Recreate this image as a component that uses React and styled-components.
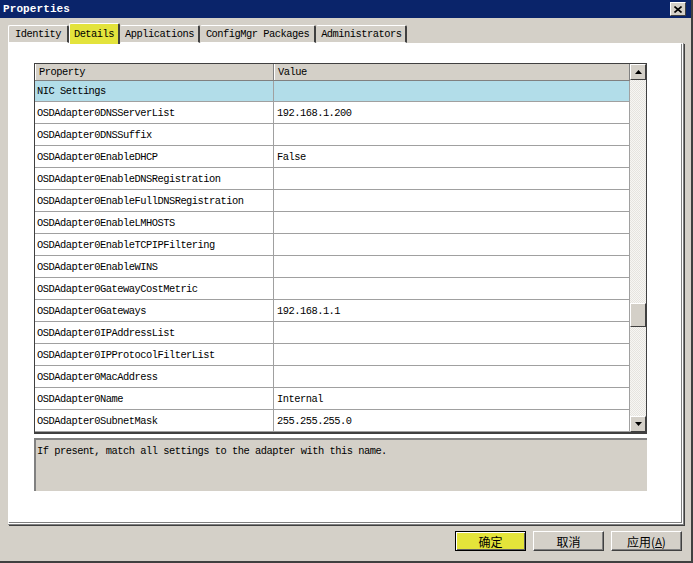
import React from "react";
import styled, { createGlobalStyle } from "styled-components";

const Global = createGlobalStyle`
  html, body { margin: 0; padding: 0; background: #d4d0c8; }
  body { font-family: "Liberation Mono", "DejaVu Sans Mono", monospace; }
`;

const MONO = `"Liberation Mono", "Noto Sans CJK SC", monospace`;

const Window = styled.div`
  width: 693px;
  height: 563px;
  box-sizing: border-box;
  background: #d4d0c8;
  border-right: 2px solid #404040;
  border-bottom: 2px solid #404040;
  display: flex;
  flex-direction: column;
  overflow: hidden;
`;

const TitleBar = styled.div`
  height: 18px;
  background: #0a246a;
  display: flex;
  align-items: center;
  justify-content: space-between;
  padding: 0 3px 0 3px;
  flex-shrink: 0;
`;

const Title = styled.span`
  color: #fff;
  font-family: ${MONO};
  font-weight: bold;
  font-size: 11px;
  letter-spacing: 0.1px;
`;

const CloseBtn = styled.div`
  width: 16px;
  height: 14px;
  box-sizing: border-box;
  background: #d4d0c8;
  border: 1px solid;
  border-color: #fff #404040 #404040 #fff;
  display: flex;
  align-items: center;
  justify-content: center;
  margin-right: 2px;
`;

const TabStrip = styled.div`
  display: flex;
  align-items: flex-end;
  padding: 0 0 0 8px;
  margin-top: 6px;
  height: 19px;
  flex-shrink: 0;
  position: relative;
  z-index: 2;
`;

const Tab = styled.div`
  font-family: ${MONO};
  font-size: 10.4px;
  letter-spacing: -0.5px;
  color: #000;
  height: ${(p) => (p.$active ? 21 : 18)}px;
  box-sizing: border-box;
  padding: 0 ${(p) => p.$pad || 5}px;
  display: flex;
  align-items: center;
  background: ${(p) => (p.$active ? "#e3e33c" : "#d4d0c8")};
  border-top: 1px solid #fff;
  border-left: 1px solid ${(p) => (p.$first || p.$active ? "#fff" : "transparent")};
  border-right: 2px solid #404040;
  border-bottom: ${(p) => (p.$active ? "none" : "1px solid #fff")};
  margin-bottom: ${(p) => (p.$active ? "-1px" : "0")};
  border-radius: 2px 2px 0 0;
`;

const Panel = styled.div`
  margin: 0 7px 0 8px;
  height: 482px;
  box-sizing: border-box;
  background: #fff;
  border-left: 1px solid #fff;
  border-top: 1px solid #fff;
  border-right: 3px double #808080;
  border-bottom: 3px double #808080;
  box-shadow: 1px 1px 0 #404040;
  padding: 19px 0 0 25px;
  display: flex;
  flex-direction: column;
  gap: 4px;
`;

const List = styled.div`
  width: 613px;
  height: 371px;
  box-sizing: border-box;
  border: 1px solid #404040;
  border-bottom-width: 2px;
  display: flex;
  overflow: hidden;
  background: #fff;
`;

const ListBody = styled.div`
  flex: 1;
  overflow: hidden;
  display: flex;
  flex-direction: column;
`;

const HeaderRow = styled.div`
  display: grid;
  grid-template-columns: 239px 1fr;
  height: 17px;
  box-sizing: border-box;
  flex-shrink: 0;
  background: #d4d0c8;
  border-bottom: 1px solid #808080;
`;

const HeaderCell = styled.div`
  font-family: ${MONO};
  font-size: 10.4px;
  letter-spacing: -0.5px;
  padding-left: 3px;
  display: flex;
  align-items: center;
  border-right: 1px solid #808080;
  border-left: 1px solid #fff;
`;

const Row = styled.div`
  display: grid;
  grid-template-columns: 239px 1fr;
  height: ${(p) => (p.$selected ? 21 : 22)}px;
  flex-shrink: 0;
  box-sizing: border-box;
  background: ${(p) => (p.$selected ? "#b2dde9" : "#fff")};
  border-bottom: 1px solid #a0a0a0;
`;

const Cell = styled.div`
  font-family: ${MONO};
  font-size: 10.4px;
  letter-spacing: -0.5px;
  color: #000;
  padding-left: ${(p) => (p.$value ? 3 : 2)}px;
  display: flex;
  align-items: center;
  border-right: 1px solid #a0a0a0;
  white-space: nowrap;
`;

const ScrollBar = styled.div`
  width: 16px;
  flex-shrink: 0;
  display: flex;
  flex-direction: column;
  background-color: #eeede9;
  background-image: repeating-conic-gradient(#f7f6f3 0 25%, #e6e4df 0 50%);
  background-size: 2px 2px;
`;

const ScrollBtn = styled.div`
  height: 16px;
  flex-shrink: 0;
  box-sizing: border-box;
  background: #d4d0c8;
  border: 1px solid;
  border-color: #fff #404040 #404040 #fff;
  display: flex;
  align-items: center;
  justify-content: center;
`;

const Track = styled.div`
  flex: 1;
  display: flex;
  flex-direction: column;
`;

const Thumb = styled.div`
  height: 24px;
  box-sizing: border-box;
  background: #d4d0c8;
  border: 1px solid;
  border-color: #fff #404040 #404040 #fff;
  margin-top: ${(p) => p.$offset}px;
`;

const Description = styled.div`
  width: 613px;
  height: 53px;
  box-sizing: border-box;
  background: #d4d0c8;
  border-top: 2px solid #808080;
  border-left: 2px solid #808080;
  font-family: ${MONO};
  font-size: 10.4px;
  letter-spacing: -0.5px;
  padding: 5px 0 0 1px;
  color: #000;
`;

const ButtonRow = styled.div`
  display: flex;
  justify-content: flex-end;
  gap: 7px;
  padding: 6px 9px 0 0;
`;

const Button = styled.div`
  width: 71px;
  height: 20px;
  box-sizing: border-box;
  background: ${(p) => (p.$primary ? "#e4e43a" : "#d4d0c8")};
  border: 1px solid;
  border-color: ${(p) => (p.$primary ? "#000" : "#fff #404040 #404040 #fff")};
  box-shadow: ${(p) => (p.$primary ? "inset 1px 1px 0 #fff, inset -1px -1px 0 #606060" : "inset -1px -1px 0 #808080")};
  font-family: "Noto Sans CJK SC", sans-serif;
  font-size: 12px;
  display: flex;
  align-items: center;
  justify-content: center;
  color: #000;
`;

const Under = styled.span`
  text-decoration: underline;
  font-size: 11px;
`;

const rows = [
  ["NIC Settings", "", true],
  ["OSDAdapter0DNSServerList", "192.168.1.200"],
  ["OSDAdapter0DNSSuffix", ""],
  ["OSDAdapter0EnableDHCP", "False"],
  ["OSDAdapter0EnableDNSRegistration", ""],
  ["OSDAdapter0EnableFullDNSRegistration", ""],
  ["OSDAdapter0EnableLMHOSTS", ""],
  ["OSDAdapter0EnableTCPIPFiltering", ""],
  ["OSDAdapter0EnableWINS", ""],
  ["OSDAdapter0GatewayCostMetric", ""],
  ["OSDAdapter0Gateways", "192.168.1.1"],
  ["OSDAdapter0IPAddressList", ""],
  ["OSDAdapter0IPProtocolFilterList", ""],
  ["OSDAdapter0MacAddress", ""],
  ["OSDAdapter0Name", "Internal"],
  ["OSDAdapter0SubnetMask", "255.255.255.0"],
];

const Arrow = ({ up }) => (
  <svg width="7" height="4" viewBox="0 0 7 4">
    <path d={up ? "M0 4 L3.5 0 L7 4 Z" : "M0 0 L7 0 L3.5 4 Z"} fill="#000" />
  </svg>
);

export default function App() {
  return (
    <>
      <Global />
      <Window>
        <TitleBar>
          <Title>Properties</Title>
          <CloseBtn>
            <svg width="8" height="7" viewBox="0 0 8 7">
              <path d="M0.5 0.5 L7.5 6.5 M7.5 0.5 L0.5 6.5" stroke="#000" strokeWidth="1.6" />
            </svg>
          </CloseBtn>
        </TitleBar>
        <TabStrip>
          <Tab $first $pad={6}>Identity</Tab>
          <Tab $active $pad={4}>Details</Tab>
          <Tab $pad={4}>Applications</Tab>
          <Tab $pad={5}>ConfigMgr Packages</Tab>
          <Tab $pad={4}>Administrators</Tab>
        </TabStrip>
        <Panel>
          <List>
            <ListBody>
              <HeaderRow>
                <HeaderCell>Property</HeaderCell>
                <HeaderCell>Value</HeaderCell>
              </HeaderRow>
              {rows.map(([k, v, sel]) => (
                <Row key={k} $selected={sel}>
                  <Cell>{k}</Cell>
                  <Cell $value>{v}</Cell>
                </Row>
              ))}
            </ListBody>
            <ScrollBar>
              <ScrollBtn>
                <Arrow up />
              </ScrollBtn>
              <Track>
                <Thumb $offset={223} />
              </Track>
              <ScrollBtn>
                <Arrow />
              </ScrollBtn>
            </ScrollBar>
          </List>
          <Description>If present, match all settings to the adapter with this name.</Description>
        </Panel>
        <ButtonRow>
          <Button $primary>确定</Button>
          <Button>取消</Button>
          <Button>
            应用(<Under>A</Under>)
          </Button>
        </ButtonRow>
      </Window>
    </>
  );
}
